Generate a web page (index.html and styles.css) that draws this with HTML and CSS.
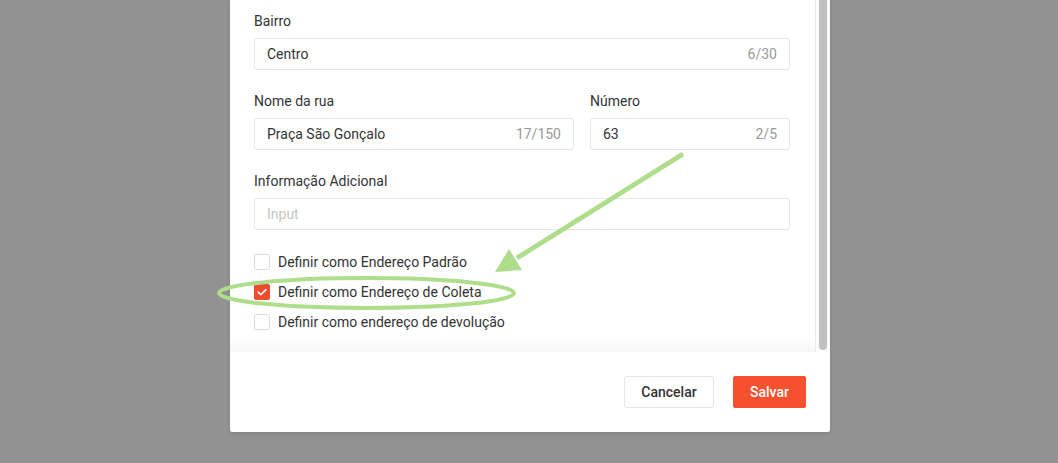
FILE: index.html
```html
<!DOCTYPE html>
<html lang="pt">
<head>
<meta charset="utf-8">
<title>Endereço</title>
<link rel="stylesheet" href="styles.css">
</head>
<body>
<div class="backdrop">
  <div class="modal">
    <div class="modal-body">
      <div class="form">
        <div class="field">
          <div class="label">Bairro</div>
          <div class="input"><span class="value">Centro</span><span class="count">6/30</span></div>
        </div>
        <div class="row">
          <div class="field grow">
            <div class="label">Nome da rua</div>
            <div class="input"><span class="value">Praça São Gonçalo</span><span class="count">17/150</span></div>
          </div>
          <div class="field narrow">
            <div class="label">Número</div>
            <div class="input"><span class="value">63</span><span class="count">2/5</span></div>
          </div>
        </div>
        <div class="field">
          <div class="label">Informação Adicional</div>
          <div class="input"><span class="placeholder">Input</span></div>
        </div>
        <div class="checks">
          <div class="check"><span class="box"></span><span class="check-label">Definir como Endereço Padrão</span></div>
          <div class="check"><span class="box checked"><svg viewBox="0 0 16 16" width="16" height="16"><path d="M4.2 8.1 L6.9 10.8 L11.9 5.6" fill="none" stroke="#fff" stroke-width="1.6" stroke-linecap="round" stroke-linejoin="round"/></svg></span><span class="check-label">Definir como Endereço de Coleta</span></div>
          <div class="check"><span class="box"></span><span class="check-label">Definir como endereço de devolução</span></div>
        </div>
      </div>
      <div class="scrollbar"><div class="thumb"></div></div>
    </div>
    <div class="modal-footer">
      <button class="btn btn-cancel">Cancelar</button>
      <button class="btn btn-save">Salvar</button>
    </div>
  </div>
</div>
<svg class="annotation" width="1058" height="463" viewBox="0 0 1058 463">
  <ellipse cx="366.5" cy="293" rx="147.5" ry="15" fill="none" stroke="#aedd8b" stroke-width="4"/>
  <line x1="683" y1="154" x2="517" y2="258" stroke="#aedd8b" stroke-width="5"/>
  <polygon points="495,272 509,249 522,270" fill="#aedd8b"/>
</svg>
</body>
</html>
```

FILE: styles.css
```css
* { box-sizing: border-box; }

html, body {
  margin: 0;
  padding: 0;
}

body {
  width: 1058px;
  height: 463px;
  overflow: hidden;
  background: #929292;
  font-family: Roboto, "Noto Sans", Arial, sans-serif;
  font-size: 14px;
  color: #333;
  position: relative;
}

.backdrop {
  height: 463px;
}

.modal {
  width: 600px;
  margin-left: 230px;
  background: #fff;
  border-radius: 0 0 3px 3px;
  overflow: hidden;
  box-shadow: 0 1px 4px rgba(0, 0, 0, 0.12);
}

.modal-body {
  display: flex;
  height: 352px;
  background: linear-gradient(to bottom, #fff 0, #fff calc(100% - 14px), #f5f5f5 100%);
}

.form {
  flex: 1;
  padding: 11px 25px 0 24px;
}

.field {
  margin-bottom: 21px;
}

.label {
  line-height: 20px;
  margin-bottom: 7px;
  color: #333;
}

.input {
  height: 32px;
  border: 1px solid #e5e5e5;
  border-radius: 3px;
  display: flex;
  align-items: center;
  justify-content: space-between;
  padding: 0 12px;
  background: #fff;
}

.value {
  color: #333;
}

.count {
  color: #999;
}

.placeholder {
  color: #c4c4c4;
}

.row {
  display: flex;
  gap: 16px;
}

.grow {
  width: 320px;
}

.narrow {
  width: 200px;
}

.checks {
  display: flex;
  flex-direction: column;
  gap: 14px;
  padding-top: 3px;
}

.check {
  display: flex;
  align-items: center;
  height: 16px;
}

.box {
  width: 16px;
  height: 16px;
  border: 1px solid #dcdcdc;
  border-radius: 2px;
  background: #fff;
  margin-right: 8px;
  flex: none;
  display: flex;
}

.box.checked {
  background: #ee4d2d;
  border-color: #ee4d2d;
  align-items: center;
  justify-content: center;
}

.box.checked svg {
  margin: -1px;
}

.check-label {
  line-height: 16px;
  color: #333;
}

.scrollbar {
  width: 15px;
  flex: none;
  border-left: 1px solid #e8e8e8;
  background: #fbfbfb;
  padding: 0 3px 2px 3px;
}

.thumb {
  width: 8px;
  height: 350px;
  background: #c1c1c1;
  border-radius: 0 0 4px 4px;
}

.modal-footer {
  height: 80px;
  display: flex;
  justify-content: flex-end;
  align-items: center;
  gap: 19px;
  padding: 0 24px;
  background: #fff;
}

.btn {
  height: 32px;
  border-radius: 2px;
  font-family: Roboto, "Noto Sans", Arial, sans-serif;
  font-size: 14px;
  font-weight: 500;
  padding: 0;
  cursor: pointer;
}

.btn-cancel {
  width: 90px;
  background: #fff;
  border: 1px solid #e5e5e5;
  color: #333;
}

.btn-save {
  width: 73px;
  background: #f5512f;
  border: 1px solid #f5512f;
  color: #fff;
}

.annotation {
  position: absolute;
  left: 0;
  top: 0;
  pointer-events: none;
}
```
